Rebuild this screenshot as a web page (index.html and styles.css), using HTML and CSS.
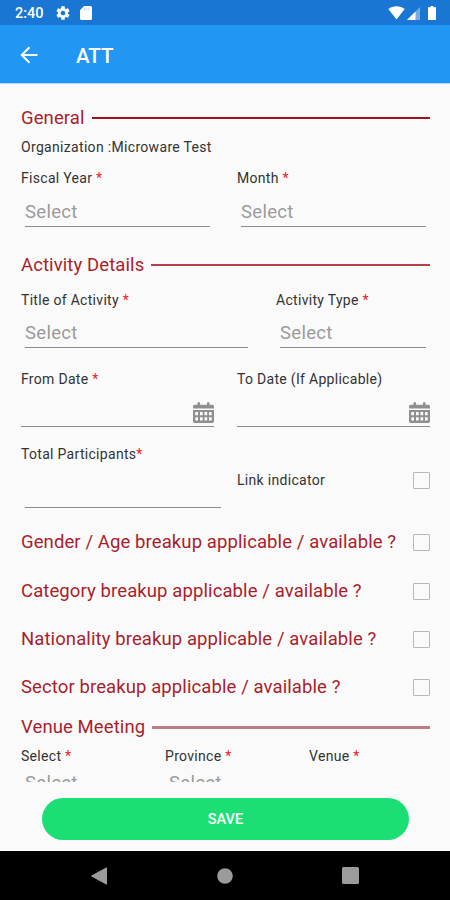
FILE: index.html
```
<!DOCTYPE html>
<html lang="en">
<head>
    <meta charset="UTF-8">
    <meta name="viewport" content="width=device-width, initial-scale=1.0">
    <title>ATT</title>
    <link rel="stylesheet" href="styles.css">
</head>
<body>

<!-- Android status bar -->
<div class="status-bar">
    <span class="time">2:40</span>
    <svg class="gear" width="16" height="16" viewBox="0 0 24 24"><path fill="#fff" d="M19.43 12.98c.04-.32.07-.64.07-.98s-.03-.66-.07-.98l2.11-1.65c.19-.15.24-.42.12-.64l-2-3.46c-.12-.22-.39-.3-.61-.22l-2.49 1c-.52-.4-1.08-.73-1.69-.98l-.38-2.65C14.46 2.18 14.25 2 14 2h-4c-.25 0-.46.18-.49.42l-.38 2.65c-.61.25-1.17.59-1.69.98l-2.49-1c-.23-.09-.49 0-.61.22l-2 3.46c-.13.22-.07.49.12.64l2.11 1.65c-.04.32-.07.65-.07.98s.03.66.07.98l-2.11 1.65c-.19.15-.24.42-.12.64l2 3.46c.12.22.39.3.61.22l2.49-1c.52.4 1.08.73 1.69.98l.38 2.65c.03.24.24.42.49.42h4c.25 0 .46-.18.49-.42l.38-2.65c.61-.25 1.17-.59 1.69-.98l2.49 1c.23.09.49 0 .61-.22l2-3.46c.12-.22.07-.49-.12-.64l-2.11-1.65zM12 15.5c-1.93 0-3.5-1.57-3.5-3.5s1.57-3.5 3.5-3.5 3.5 1.57 3.5 3.5-1.57 3.5-3.5 3.5z"/></svg>
    <svg class="sd" width="12" height="14" viewBox="0 0 12 14"><path fill="#fff" d="M4 0h6.500a1.500 1.500 0 0 1 1.500 1.500v11a1.500 1.500 0 0 1-1.500 1.500h-9A1.500 1.500 0 0 1 0 12.500V4.200z"/><path stroke="#1976d2" stroke-width=".8" opacity=".3" d="M4.500 2v2.500M6.700 2v2.500M8.900 2v2.500"/></svg>
    <svg class="wifi" width="17" height="14" viewBox="0 0 17 14"><path fill="#fff" d="M.3 3C5 -.8 12 -.8 16.700 3L8.500 13.500z"/></svg>
    <svg class="signal" width="13" height="13" viewBox="0 0 13 13"><path fill="#fff" opacity=".4" d="M13 0v13H0z"/><path fill="#fff" d="M8.500 4.500V13H0z"/></svg>
    <svg class="battery" width="8" height="14" viewBox="0 0 8 14"><path fill="#fff" d="M2.500 0h3v1.300H8V14H0V1.300h2.500z"/></svg>
</div>

<div class="app-bar">
    <svg class="back" width="18" height="18" viewBox="0 0 18 18" fill="none" stroke="#fff" stroke-width="2"><path d="M17.500 9H2M9.500 1.200L1.700 9l7.800 7.800"/></svg>
    <h1>ATT</h1>
</div>

<div class="form">
    <h2 class="section general">General</h2>
    <p class="organization">Organization :Microware Test</p>
    <div class="row halves">
        <div class="field">
            <label>Fiscal Year <b>*</b></label>
            <div class="select">Select</div>
        </div>
        <div class="field">
            <label>Month <b>*</b></label>
            <div class="select">Select</div>
        </div>
    </div>

    <h2 class="section details">Activity Details</h2>
    <div class="row activity">
        <div class="field">
            <label>Title of Activity <b>*</b></label>
            <div class="select">Select</div>
        </div>
        <div class="field">
            <label>Activity Type <b>*</b></label>
            <div class="select">Select</div>
        </div>
    </div>
    <div class="row halves dates">
        <div class="field">
            <label>From Date <b>*</b></label>
            <div class="date">
                <svg class="calendar" width="21" height="21" viewBox="0 0 21 21"><path fill="#8f8f8f" d="M0 6.500V4.500Q0 2.700 1.800 2.700H4.500V.8Q6 -.6 7 .8V2.700H14V.8Q15 -.6 16.500 .8V2.700H19.200Q21 2.700 21 4.500V6.500z"/><path fill="#8f8f8f" fill-rule="evenodd" d="M0 8h21v11q0 2-2 2H2q-2 0-2-2zM2.300 10v3.200h2.700V10zm4.700 0v3.200h2.700V10zm4.500 0v3.200h2.700V10zm4.500 0v3.200h2.700V10zM2.300 15.200v3.200h2.700v-3.200zm4.700 0v3.200h2.700v-3.200zm4.500 0v3.200h2.700v-3.200zm4.500 0v3.200h2.700v-3.200z"/></svg>
            </div>
        </div>
        <div class="field">
            <label>To Date (If Applicable)</label>
            <div class="date">
                <svg class="calendar" width="21" height="21" viewBox="0 0 21 21"><path fill="#8f8f8f" d="M0 6.500V4.500Q0 2.700 1.800 2.700H4.500V.8Q6 -.6 7 .8V2.700H14V.8Q15 -.6 16.500 .8V2.700H19.200Q21 2.700 21 4.500V6.500z"/><path fill="#8f8f8f" fill-rule="evenodd" d="M0 8h21v11q0 2-2 2H2q-2 0-2-2zM2.300 10v3.200h2.700V10zm4.700 0v3.200h2.700V10zm4.500 0v3.200h2.700V10zm4.500 0v3.200h2.700V10zM2.300 15.200v3.200h2.700v-3.200zm4.700 0v3.200h2.700v-3.200zm4.500 0v3.200h2.700v-3.200zm4.500 0v3.200h2.700v-3.200z"/></svg>
            </div>
        </div>
    </div>
    <div class="row participants">
        <div class="field">
            <label>Total Participants<b>*</b></label>
            <div class="number"></div>
        </div>
        <div class="link">
            <label>Link indicator</label>
            <span class="checkbox"></span>
        </div>
    </div>

    <div class="breakups">
        <div class="breakup"><span>Gender / Age breakup applicable / available ?</span><span class="checkbox"></span></div>
        <div class="breakup"><span>Category breakup applicable / available ?</span><span class="checkbox"></span></div>
        <div class="breakup"><span>Nationality breakup applicable / available ?</span><span class="checkbox"></span></div>
        <div class="breakup"><span>Sector breakup applicable / available ?</span><span class="checkbox"></span></div>
    </div>

    <h2 class="section venue">Venue Meeting</h2>
    <div class="row thirds">
        <div class="field">
            <label>Select <b>*</b></label>
            <div class="select">Select</div>
        </div>
        <div class="field">
            <label>Province <b>*</b></label>
            <div class="select">Select</div>
        </div>
        <div class="field">
            <label>Venue <b>*</b></label>
        </div>
    </div>
</div>

<div class="footer">
    <button class="save">SAVE</button>
</div>

<!-- Android navigation bar -->
<div class="nav-bar">
    <svg width="16" height="18" viewBox="0 0 16 18"><path fill="#9b9b9b" d="M15.500 .8v16.400L.5 9z" stroke="#9b9b9b" stroke-linejoin="round"/></svg>
    <svg width="16" height="16" viewBox="0 0 16 16"><circle fill="#9b9b9b" cx="8" cy="8" r="7.800"/></svg>
    <svg width="17" height="17" viewBox="0 0 17 17"><rect fill="#9b9b9b" width="17" height="17" rx="1.500"/></svg>
</div>

</body>
</html>
```
FILE: styles.css
```
* {
    box-sizing: border-box;
}

body {
    margin: 0;
    width: 450px;
    height: 900px;
    display: flex;
    flex-direction: column;
    overflow: hidden;
    background-color: #fafafa;
    color: #333;
    font-family: Roboto, sans-serif;
}

svg {
    display: block;
    flex: none;
}

/* Top bars */
.status-bar {
    flex: none;
    height: 25px;
    display: flex;
    align-items: center;
    padding: 1px 14px 0 15px;
    background-color: #1976d2;
    color: white;
}

.time {
    width: 40px;
    font-size: 14.5px;
    font-weight: 500;
}

.sd {
    margin-left: 9px;
}

.wifi {
    margin-left: auto;
}

.signal {
    margin-left: 2px;
}

.battery {
    margin-left: 8px;
}

.app-bar {
    flex: none;
    height: 58px;
    display: flex;
    align-items: center;
    gap: 38px;
    padding: 2px 20px 0;
    background-color: #2196f3;
    color: white;
    box-shadow: 0 1px 1px #b5dcfa;
}

.app-bar h1 {
    margin: 1px 0 0;
    font-size: 20.5px;
    font-weight: 500;
}

/* Form */
.form {
    flex: none;
    height: 699px;
    padding: 22px 20px 0 21px;
    overflow: hidden;
}

.section {
    display: flex;
    align-items: center;
    gap: 7px;
    height: 26px;
    margin: 0;
    color: #a91e2c;
    font-size: 18.5px;
    font-weight: 400;
    letter-spacing: 0.1px;
}

.section::after {
    content: "";
    flex: 1;
    height: 2px;
    background-color: #a3121c;
}

.details {
    margin-top: 25px;
}

.details::after {
    background-color: #b93f49;
}

.venue {
    margin-top: 3px;
}

.venue::after {
    height: 3px;
    background-color: #c17c80;
}

.organization {
    height: 20px;
    margin: 6px 0 11px;
    font-size: 14px;
    line-height: 20px;
    letter-spacing: 0.32px;
}

.row {
    display: grid;
}

.halves {
    grid-template-columns: 193px 193px;
    column-gap: 23px;
}

.activity {
    grid-template-columns: 231px 154px;
    column-gap: 24px;
    margin-top: 12px;
}

.activity .select {
    height: 38px;
    padding-top: 11px;
}

.dates {
    margin-top: 21px;
}

.participants {
    grid-template-columns: 204px 193px;
    column-gap: 12px;
    margin-top: 17px;
}

.thirds {
    grid-template-columns: 144px 144px 1fr;
    margin-top: 6px;
}

label {
    display: block;
    height: 20px;
    font-size: 14px;
    line-height: 20px;
    letter-spacing: 0.3px;
}

label b {
    color: #f0202a;
    font-weight: 400;
}

.select {
    height: 39px;
    margin: 0 4px;
    padding-top: 12px;
    border-bottom: 1px solid #8c8c8c;
    color: #9b9b9b;
    font-size: 18.5px;
    line-height: 24px;
    letter-spacing: 0.3px;
}

.thirds .select {
    padding-top: 5px;
}

.date {
    display: flex;
    justify-content: flex-end;
    align-items: flex-end;
    height: 38px;
    padding-bottom: 3px;
    border-bottom: 1px solid #8c8c8c;
}

.number {
    height: 44px;
    margin: 0 4px;
    border-bottom: 1px solid #8c8c8c;
}

.link {
    display: flex;
    justify-content: space-between;
    align-items: center;
    height: 34px;
    margin-top: 19px;
}

.checkbox {
    flex: none;
    width: 17px;
    height: 17px;
    border: 1.5px solid #b8b8b8;
    border-radius: 1px;
}

.breakups {
    padding-top: 9px;
}

.breakup {
    display: flex;
    justify-content: space-between;
    align-items: center;
    height: 48px;
    color: #a91e2c;
    font-size: 18.5px;
    letter-spacing: 0.1px;
}

.breakup:first-child {
    height: 50px;
}

/* Bottom bars */
.footer {
    flex: none;
    height: 69px;
    padding: 16px 41px 0 42px;
}

.save {
    display: block;
    width: 100%;
    height: 42px;
    border: none;
    border-radius: 21px;
    background-color: #1bdf74;
    color: white;
    font-family: inherit;
    font-size: 14.5px;
    font-weight: 500;
}

.nav-bar {
    flex: 1;
    display: flex;
    justify-content: space-between;
    align-items: center;
    padding: 0 91px;
    background-color: #000;
}
```
